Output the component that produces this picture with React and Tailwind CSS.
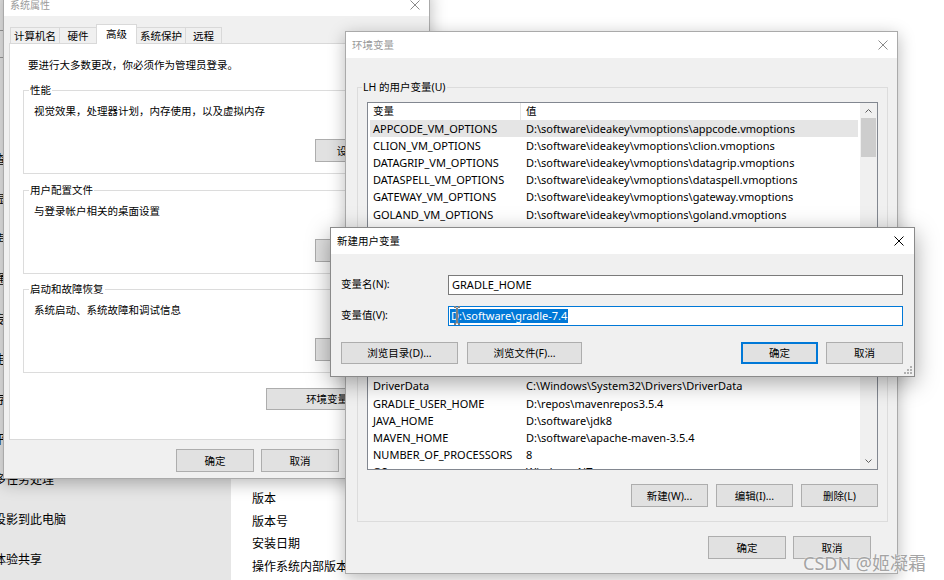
import React from "react";

const F = "font-['Noto_Sans','Noto_Sans_CJK_SC',sans-serif]";

function XIcon({ color = "#000" }) {
  return (
    <svg width="10" height="10" viewBox="0 0 10 10" className="block">
      <path d="M0.5 0.5 L9.5 9.5 M9.5 0.5 L0.5 9.5" stroke={color} strokeWidth="1" fill="none" />
    </svg>
  );
}

function Btn({ className = "", children, def = false }) {
  return (
    <div
      className={
        "flex items-center justify-center bg-[#e1e1e1] text-[10.5px] leading-[14px] text-black shrink-0 " +
        (def ? "border border-[#0078d7] shadow-[inset_0_0_0_1px_#0078d7] " : "border border-[#adadad] ") +
        className
      }
    >
      {children}
    </div>
  );
}

function Chevron({ up }) {
  return (
    <svg width="7" height="4" viewBox="0 0 7 4" className="block">
      <path d={up ? "M0.5 3.5 L3.5 0.5 L6.5 3.5" : "M0.5 0.5 L3.5 3.5 L6.5 0.5"} stroke="#606060" strokeWidth="1" fill="none" />
    </svg>
  );
}

const V = "D:\\software\\ideakey\\vmoptions\\";
const ROWS = [
  ["APPCODE_VM_OPTIONS", V + "appcode.vmoptions"],
  ["CLION_VM_OPTIONS", V + "clion.vmoptions"],
  ["DATAGRIP_VM_OPTIONS", V + "datagrip.vmoptions"],
  ["DATASPELL_VM_OPTIONS", V + "dataspell.vmoptions"],
  ["GATEWAY_VM_OPTIONS", V + "gateway.vmoptions"],
  ["GOLAND_VM_OPTIONS", V + "goland.vmoptions"],
  ["IDEA_VM_OPTIONS", V + "idea.vmoptions"],
  ["JETBRAINSCLIENT_VM_OPTIONS", V + "jetbrainsclient.vmoptions"],
  ["JETBRAINS_CLIENT_VM_OPTIONS", V + "jetbrains_client.vmoptions"],
  ["PHPSTORM_VM_OPTIONS", V + "phpstorm.vmoptions"],
  ["PYCHARM_VM_OPTIONS", V + "pycharm.vmoptions"],
  ["RIDER_VM_OPTIONS", V + "rider.vmoptions"],
  ["RUBYMINE_VM_OPTIONS", V + "rubymine.vmoptions"],
  ["STUDIO_VM_OPTIONS", V + "studio.vmoptions"],
  ["WEBSTORM_VM_OPTIONS", V + "webstorm.vmoptions"],
  ["DriverData", "C:\\Windows\\System32\\Drivers\\DriverData"],
  ["GRADLE_USER_HOME", "D:\\repos\\mavenrepos3.5.4"],
  ["JAVA_HOME", "D:\\software\\jdk8"],
  ["MAVEN_HOME", "D:\\software\\apache-maven-3.5.4"],
  ["NUMBER_OF_PROCESSORS", "8"],
  ["OS", "Windows_NT"],
  ["Path", "C:\\Users\\LH\\AppData\\Local\\Microsoft\\WindowsApps;"],
];

const NAV = [
  "查找设置",
  "显示",
  "声音",
  "通知和操作",
  "专注助手",
  "电源和睡眠",
  "存储",
  "平板模式",
  "多任务处理",
  "投影到此电脑",
  "体验共享",
  "剪贴板",
];

function Background() {
  return (
    <div className="flex h-full w-full">
      <div className="w-[231px] h-full bg-[#e6e6e6] flex flex-col pt-[30px] overflow-hidden shrink-0">
        <div className="ml-[-20px] w-[200px] h-[28px] border border-[#9a9a9a] shrink-0" />
        <div className="mt-[82px] flex flex-col">
          {NAV.map((t) => (
            <div key={t} className="h-[40px] flex items-center ml-[-6px] text-[12px] text-black whitespace-nowrap shrink-0">
              {t}
            </div>
          ))}
        </div>
      </div>
      <div className="flex-1 bg-white pl-[21px] pt-[488px] flex flex-col text-[12px] text-black">
        {["版本", "版本号", "安装日期", "操作系统内部版本"].map((t) => (
          <div key={t} className="h-[22.5px] leading-[22.5px] whitespace-nowrap">
            {t}
          </div>
        ))}
      </div>
    </div>
  );
}

function Group({ label, text, btn, className = "" }) {
  return (
    <fieldset className={"border border-[#dcdcdc] pl-[10px] pr-[10px] pb-[11px] " + className}>
      <legend className="ml-[-5px] px-[1px] text-[10.5px] leading-[14px] text-black">{label}</legend>
      <div className="mt-[6px] text-[10.5px] leading-[16px] text-black">{text}</div>
      <div className="mt-[20px] flex justify-end">
        <Btn className="w-[85px] h-[23px]">{btn}</Btn>
      </div>
    </fieldset>
  );
}

function SysProps() {
  const tabs = [
    ["计算机名", "w-[50px]"],
    ["硬件", "w-[38px]"],
    ["高级", "w-[41px]", true],
    ["系统保护", "w-[50px]"],
    ["远程", "w-[37px]"],
  ];
  return (
    <div className="absolute left-[3px] top-[-12px] w-[427px] h-[491px] flex flex-col border border-[#aaaaaa] bg-[#f0f0f0] shadow-[0_4px_16px_rgba(0,0,0,0.28)]">
      <div className="h-[27px] bg-white flex items-end justify-between pl-[6px] pr-[9px] pb-[4px] shrink-0">
        <span className="text-[10px] leading-[14px] text-[#9a9a9a]">系统属性</span>
        <div className="mb-[2px]">
          <XIcon color="#8a8a8a" />
        </div>
      </div>
      <div className="flex-1 flex flex-col px-[5px] pt-[8px]">
        <div className="h-[20px] flex items-end pl-[1px] relative z-10 -mb-px">
          {tabs.map(([t, w, sel], i) => (
            <div
              key={t}
              className={
                "flex items-center justify-center border-t border-l border-r border-[#d9d9d9] text-[10.5px] leading-[14px] text-black " +
                w +
                (i > 0 ? " -ml-px" : "") +
                (sel ? " h-[20px] bg-white pb-[2px] relative z-10" : " h-[16px] mb-px bg-[#f0f0f0]")
              }
            >
              {t}
            </div>
          ))}
        </div>
        <div className="h-[397px] bg-white border border-[#d9d9d9] flex flex-col pl-[13px] pr-[12px] shrink-0">
          <div className="mt-[13px] ml-[5px] text-[10.5px] leading-[16px] text-black">
            要进行大多数更改，你必须作为管理员登录。
          </div>
          <Group className="mt-[10px]" label="性能" text="视觉效果，处理器计划，内存使用，以及虚拟内存" btn="设置(S)..." />
          <Group className="mt-[9px]" label="用户配置文件" text="与登录帐户相关的桌面设置" btn="设置(E)..." />
          <Group className="mt-[8px]" label="启动和故障恢复" text="系统启动、系统故障和调试信息" btn="设置(T)..." />
          <div className="mt-[15px] flex justify-end">
            <Btn className="w-[145px] h-[22px]">环境变量(N)...</Btn>
          </div>
        </div>
        <div className="mt-[9px] flex justify-end gap-[7px]">
          <Btn className="w-[78px] h-[23px]">确定</Btn>
          <Btn className="w-[78px] h-[23px]">取消</Btn>
          <Btn className="w-[78px] h-[23px]">应用(A)</Btn>
        </div>
      </div>
    </div>
  );
}

function EnvVars() {
  return (
    <div className="absolute left-[345px] top-[31px] w-[553px] h-[543px] flex flex-col border border-[#aaaaaa] bg-[#f0f0f0] shadow-[0_4px_16px_rgba(0,0,0,0.28)]">
      <div className="h-[26px] bg-white flex items-center justify-between pl-[6px] pr-[9px] shrink-0">
        <span className="text-[10.5px] leading-[14px] text-[#9a9a9a]">环境变量</span>
        <XIcon color="#8a8a8a" />
      </div>
      <div className="flex-1 flex flex-col pt-[22px] pl-[11px] pr-[9px]">
        <fieldset className="border border-[#dcdcdc] pl-[9px] pr-[9px] pb-[14px]">
          <legend className="ml-[-5px] px-[1px] text-[10.5px] leading-[14px] text-black">LH 的用户变量(U)</legend>
          <div className="mt-[8px] h-[368px] flex border border-[#828790] bg-white">
            <div className="flex-1 flex flex-col overflow-hidden">
              <div className="h-[17px] flex shrink-0 text-[10.5px] text-black">
                <div className="w-[153px] border-r border-[#e5e5e5] pl-[5px] flex items-center">变量</div>
                <div className="pl-[5px] flex items-center">值</div>
              </div>
              {ROWS.map(([n, v], i) => (
                <div
                  key={n}
                  className={
                    "h-[17.2px] mx-[2px] flex items-center shrink-0 text-[11px] leading-[14px] text-black whitespace-nowrap " +
                    (i === 0 ? "bg-[#e5e5e5]" : "")
                  }
                >
                  <div className="w-[151px] pl-[3px] shrink-0">{n}</div>
                  <div className="pl-[5px]">{v}</div>
                </div>
              ))}
            </div>
            <div className="w-[17px] bg-[#f0f0f0] flex flex-col shrink-0">
              <div className="h-[15px] flex items-center justify-center">
                <Chevron up />
              </div>
              <div className="h-[39px] mx-px bg-[#cdcdcd]" />
              <div className="flex-1" />
              <div className="h-[17px] flex items-center justify-center">
                <Chevron />
              </div>
            </div>
          </div>
          <div className="mt-[14px] flex justify-end gap-[8px]">
            <Btn className="w-[77px] h-[23px]">新建(W)...</Btn>
            <Btn className="w-[77px] h-[23px]">编辑(I)...</Btn>
            <Btn className="w-[77px] h-[23px]">删除(L)</Btn>
          </div>
        </fieldset>
        <div className="mt-[14px] flex justify-end gap-[7px] pr-[17px]">
          <Btn className="w-[78px] h-[23px]">确定</Btn>
          <Btn className="w-[78px] h-[23px]">取消</Btn>
        </div>
      </div>
    </div>
  );
}

function NewVar() {
  return (
    <div className="absolute left-[330px] top-[227px] w-[585px] h-[150px] flex flex-col border border-[#8a8a8a] bg-[#f0f0f0] shadow-[0_6px_22px_rgba(0,0,0,0.35)]">
      <div className="h-[26px] bg-white flex items-center justify-between pl-[6px] pr-[10px] shrink-0">
        <span className="text-[10.5px] leading-[14px] text-black">新建用户变量</span>
        <XIcon color="#000" />
      </div>
      <div className="flex-1 flex flex-col pt-[21px] pl-[10px] pr-[11px] relative">
        <div className="h-[20px] flex items-center">
          <div className="w-[107px] text-[10.5px] text-black shrink-0">变量名(N):</div>
          <div className="flex-1 h-full border border-[#7a7a7a] bg-white pl-[3px] flex items-center text-[11px] text-black">
            GRADLE_HOME
          </div>
        </div>
        <div className="mt-[11px] h-[20px] flex items-center">
          <div className="w-[107px] text-[10.5px] text-black shrink-0">变量值(V):</div>
          <div className="flex-1 h-full border border-[#0078d7] bg-white pl-px flex items-center text-[11px]">
            <span className="bg-[#0078d7] text-white leading-[14px] pl-[1px] pr-[1px]">D:\software\gradle-7.4</span>
          </div>
        </div>
        <div className="mt-[16px] flex items-center">
          <Btn className="w-[117px] h-[22px]">浏览目录(D)...</Btn>
          <Btn className="w-[115px] h-[22px] ml-[9px]">浏览文件(F)...</Btn>
          <div className="flex-1" />
          <Btn def className="w-[77px] h-[22px]">确定</Btn>
          <Btn className="w-[77px] h-[22px] ml-[8px]">取消</Btn>
        </div>
        <svg className="absolute left-[122px] top-[52px]" width="8" height="19" viewBox="0 0 8 19">
          <path d="M1 1 H3 M5 1 H7 M4 1.5 V17.5 M1 18 H3 M5 18 H7" stroke="#fff" strokeWidth="2.2" fill="none" />
          <path d="M1 1 H3 M5 1 H7 M4 1.5 V17.5 M1 18 H3 M5 18 H7" stroke="#000" strokeWidth="1" fill="none" />
        </svg>
        <svg className="absolute right-[1px] bottom-[1px]" width="9" height="9" viewBox="0 0 9 9">
          <rect x="6" y="0" width="2" height="2" fill="#b0b0b0" />
          <rect x="3" y="3" width="2" height="2" fill="#b0b0b0" />
          <rect x="6" y="3" width="2" height="2" fill="#b0b0b0" />
          <rect x="0" y="6" width="2" height="2" fill="#b0b0b0" />
          <rect x="3" y="6" width="2" height="2" fill="#b0b0b0" />
          <rect x="6" y="6" width="2" height="2" fill="#b0b0b0" />
        </svg>
      </div>
    </div>
  );
}

export default function App() {
  return (
    <div className={"relative w-[944px] h-[580px] overflow-hidden bg-white " + F}>
      <Background />
      <SysProps />
      <EnvVars />
      <NewVar />
      <div className="absolute left-[803px] top-[551px] text-[18px] leading-[24px] text-[#a4a4a4] whitespace-nowrap [text-shadow:0_0_2px_#fff]">
        CSDN @姬凝霜
      </div>
    </div>
  );
}
